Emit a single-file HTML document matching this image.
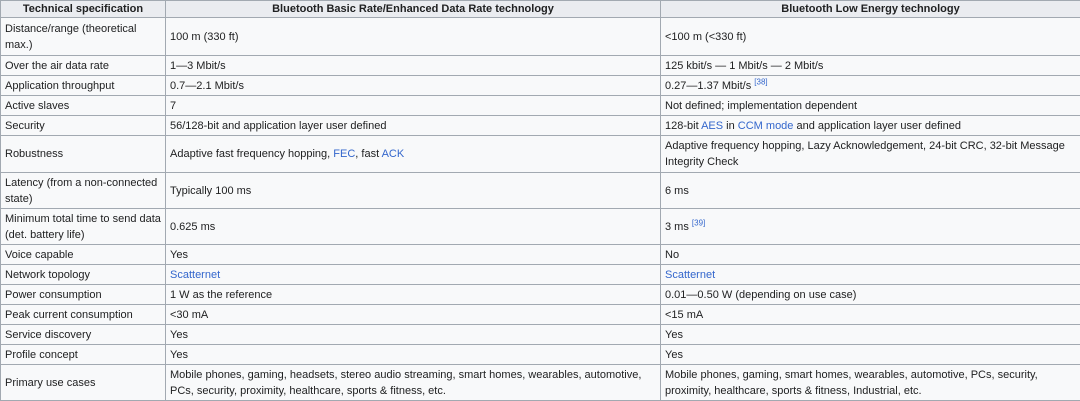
<!DOCTYPE html>
<html><head><meta charset="utf-8"><style>
body{margin:0;background:#fff;}
table{border-collapse:collapse;table-layout:fixed;width:1080px;font-family:"Liberation Sans",sans-serif;font-size:11px;color:#202122;}
td,th{border:1px solid #a2a9b1;padding:0 4px;line-height:16px;vertical-align:middle;background:#f8f9fa;overflow:hidden;}
th{background:#eaecf0;font-weight:bold;text-align:center;height:16px;}
a{color:#3366cc;text-decoration:none}
sup{font-size:8px;line-height:0}
</style></head><body>
<table>
<colgroup><col style="width:165px"><col style="width:495px"><col style="width:420px"></colgroup>
<tr><th>Technical specification</th><th>Bluetooth Basic Rate/Enhanced Data Rate technology</th><th>Bluetooth Low Energy technology</th></tr>
<tr style="height:38px"><td>Distance/range (theoretical max.)</td><td>100 m (330 ft)</td><td>&lt;100 m (&lt;330 ft)</td></tr>
<tr style="height:20px"><td>Over the air data rate</td><td>1—3 Mbit/s</td><td>125 kbit/s — 1 Mbit/s — 2 Mbit/s</td></tr>
<tr style="height:20px"><td>Application throughput</td><td>0.7—2.1 Mbit/s</td><td>0.27—1.37 Mbit/s <sup><a>[38]</a></sup></td></tr>
<tr style="height:20px"><td>Active slaves</td><td>7</td><td>Not defined; implementation dependent</td></tr>
<tr style="height:20px"><td>Security</td><td>56/128-bit and application layer user defined</td><td>128-bit <a>AES</a> in <a>CCM mode</a> and application layer user defined</td></tr>
<tr style="height:37px"><td>Robustness</td><td>Adaptive fast frequency hopping, <a>FEC</a>, fast <a>ACK</a></td><td>Adaptive frequency hopping, Lazy Acknowledgement, 24-bit CRC, 32-bit Message Integrity Check</td></tr>
<tr style="height:36px"><td>Latency (from a non-connected state)</td><td>Typically 100 ms</td><td>6 ms</td></tr>
<tr style="height:36px"><td>Minimum total time to send data (det. battery life)</td><td>0.625 ms</td><td>3 ms <sup><a>[39]</a></sup></td></tr>
<tr style="height:20px"><td>Voice capable</td><td>Yes</td><td>No</td></tr>
<tr style="height:20px"><td>Network topology</td><td><a>Scatternet</a></td><td><a>Scatternet</a></td></tr>
<tr style="height:20px"><td>Power consumption</td><td>1 W as the reference</td><td>0.01—0.50 W (depending on use case)</td></tr>
<tr style="height:20px"><td>Peak current consumption</td><td>&lt;30 mA</td><td>&lt;15 mA</td></tr>
<tr style="height:20px"><td>Service discovery</td><td>Yes</td><td>Yes</td></tr>
<tr style="height:20px"><td>Profile concept</td><td>Yes</td><td>Yes</td></tr>
<tr style="height:36px"><td>Primary use cases</td><td>Mobile phones, gaming, headsets, stereo audio streaming, smart homes, wearables, automotive, PCs, security, proximity, healthcare, sports &amp; fitness, etc.</td><td>Mobile phones, gaming, smart homes, wearables, automotive, PCs, security, proximity, healthcare, sports &amp; fitness, Industrial, etc.</td></tr>
</table>
</body></html>
